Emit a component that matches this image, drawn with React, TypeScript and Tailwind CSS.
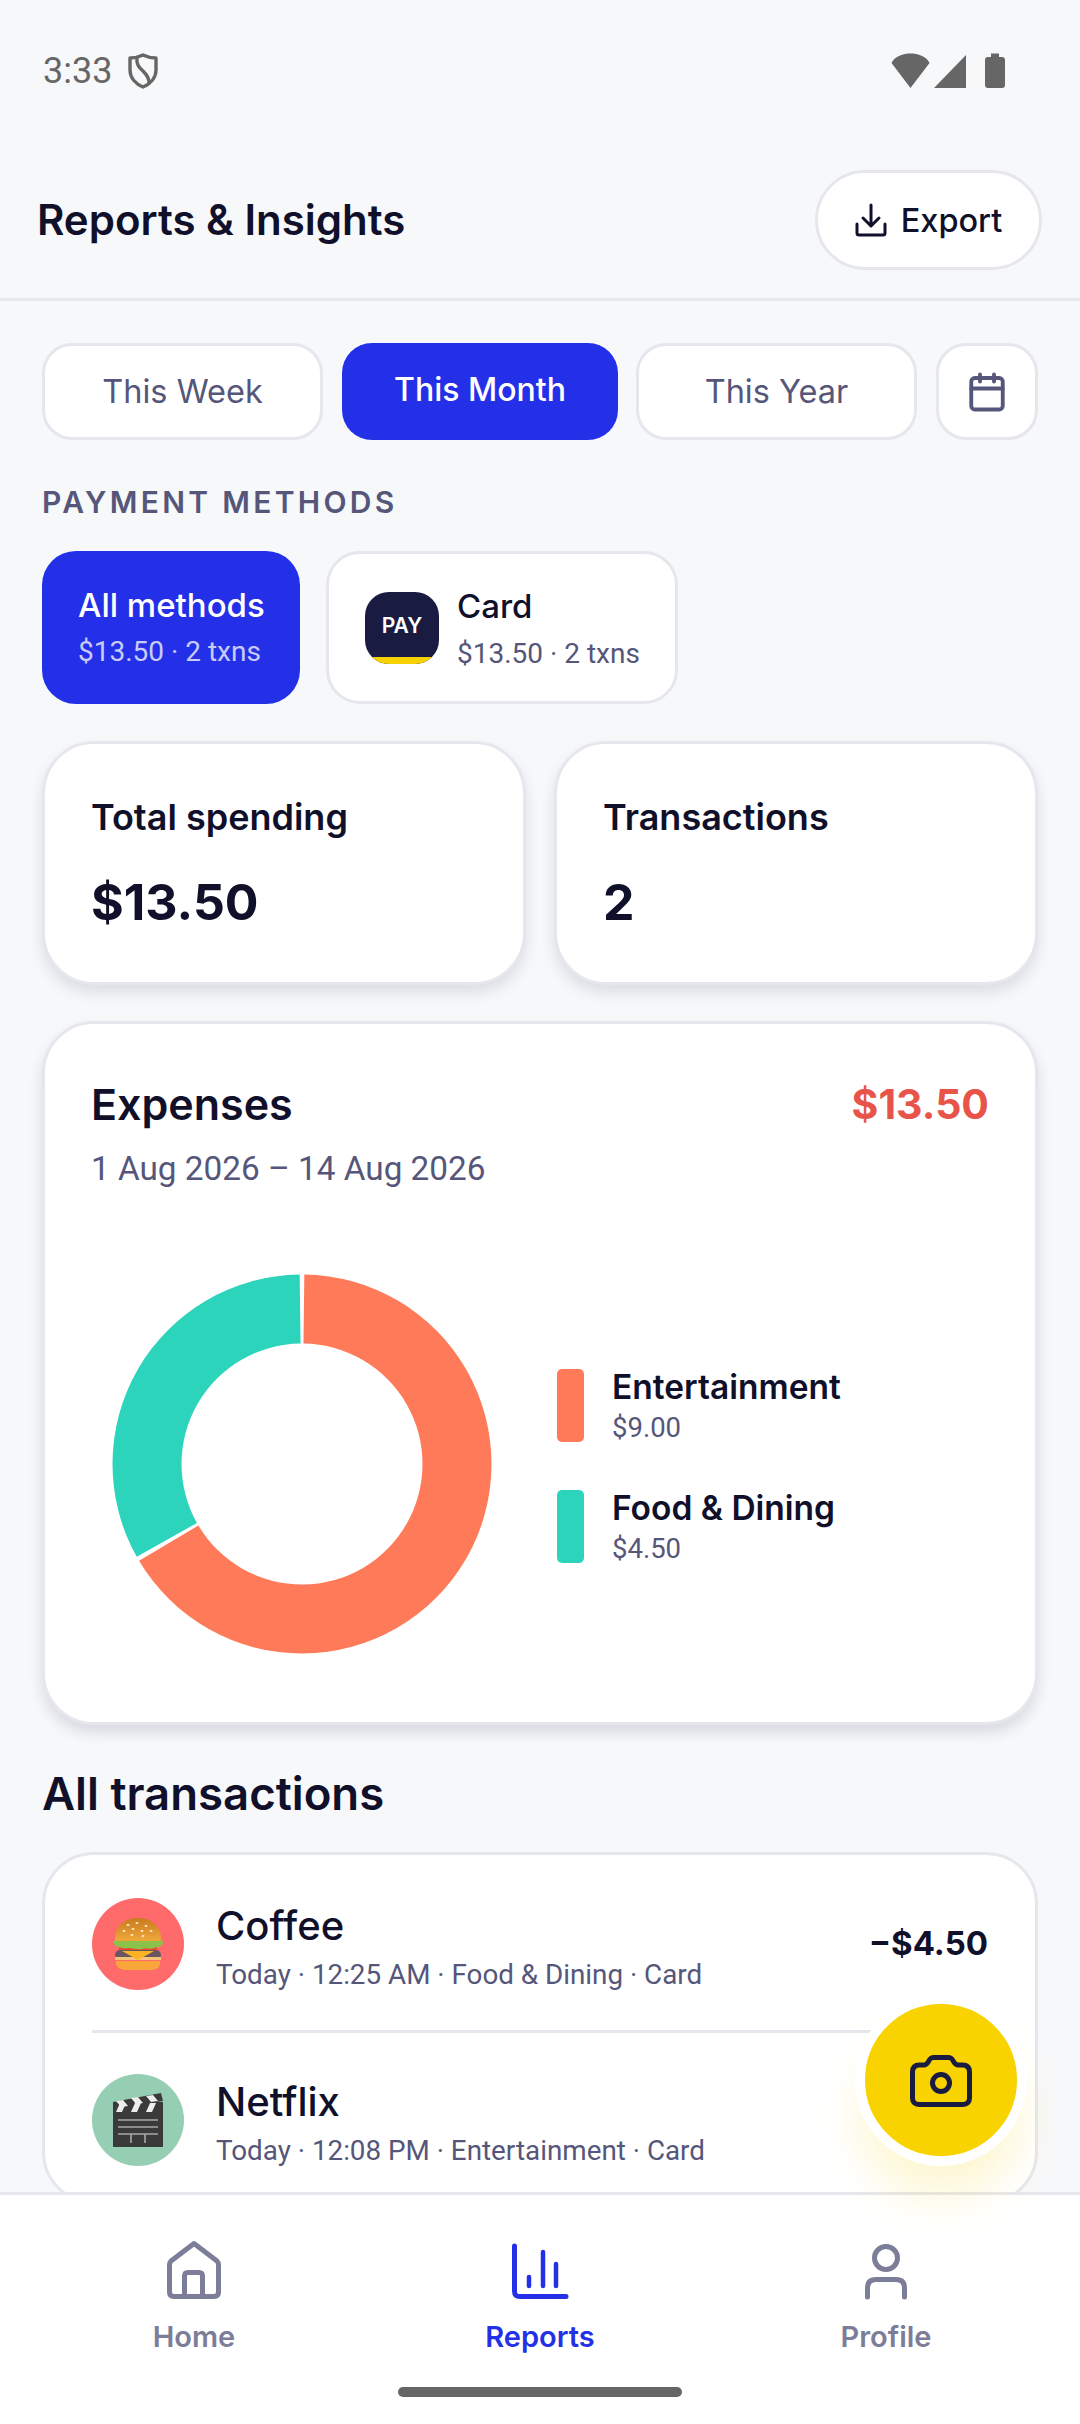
import { Calendar } from 'lucide-react';

const HEADING = "font-['Inter','Lato',sans-serif]";
const BODY = "font-['Roboto','Liberation_Sans',sans-serif]";

// annular sector, angles in degrees clockwise from 12 o'clock
function sector(cx: number, cy: number, r1: number, r2: number, a0: number, a1: number) {
  const pt = (r: number, a: number) => {
    const t = (a * Math.PI) / 180;
    return `${(cx + r * Math.sin(t)).toFixed(2)} ${(cy - r * Math.cos(t)).toFixed(2)}`;
  };
  const large = a1 - a0 > 180 ? 1 : 0;
  return `M${pt(r2, a0)} A${r2} ${r2} 0 ${large} 1 ${pt(r2, a1)} L${pt(r1, a1)} A${r1} ${r1} 0 ${large} 0 ${pt(r1, a0)} Z`;
}

function StatusBar() {
  return (
    <div className="flex h-[140px] items-start justify-between pl-[43px] pr-[74px] pt-[50px]">
      <div className="flex items-center gap-[16px]">
        <span className={`${BODY} text-[36px] leading-[42px] text-[#666666]`}>3:33</span>
        <svg width="30" height="36" viewBox="0 0 30 36" fill="none" stroke="#666666" strokeWidth="3.4" strokeLinejoin="round">
          <path d="M15 2 C19 4 23 5 28 5 V17 C28 25 22 31 15 34 C8 31 2 25 2 17 V5 C7 5 11 4 15 2 Z" />
          <path d="M9 5 C8 12 12 15 15 18 C18 21 22 25 21 31" />
        </svg>
      </div>
      <svg width="115" height="36" viewBox="0 0 115 36" fill="#666666" className="mt-[3px]">
        <path d="M19.500 35 L0.500 10 C4 3 12 0.500 19.500 0.500 C27 0.500 35 3 38.500 10 Z" />
        <path d="M43 35 L75 35 L75 2 Z" />
        <path d="M94 7 C94 5 95 4 97 4 H100 V0.500 H108 V4 H111 C113 4 114 5 114 7 V32 C114 34 113 35 111 35 H97 C95 35 94 34 94 32 Z" />
      </svg>
    </div>
  );
}

function Header() {
  return (
    <div className="flex h-[161px] items-start justify-between border-b-[3px] border-[#E6E7EC] pl-[37px] pr-[38px] pt-[30px]">
      <h1 className={`${HEADING} mt-[25px] text-[42px] leading-[50px] font-semibold text-[#10102A]`}>
        Reports &amp; Insights
      </h1>
      <div className="flex h-[100px] w-[227px] items-center justify-center gap-[14px] rounded-[50px] border-[3px] border-[#E6E7EC] bg-white">
        <svg width="32" height="34" viewBox="0 0 32 34" fill="none" stroke="#10102A" strokeWidth="3" strokeLinecap="round" strokeLinejoin="round">
          <path d="M16 2 V23 M8 15 L16 23 L24 15" />
          <path d="M2 21 V30 C2 31.500 3 32 4 32 H28 C29 32 30 31.500 30 30 V21" />
        </svg>
        <span className={`${HEADING} pt-[2px] text-[32.500px] font-medium text-[#10102A]`}>Export</span>
      </div>
    </div>
  );
}

function PeriodTabs() {
  const idle = `flex h-[97px] items-center justify-center rounded-[30px] border-[3px] border-[#E6E7EC] bg-white pt-[2px] ${HEADING} text-[32.500px] text-[#55567A]`;
  return (
    <div className="flex pl-[42px] pt-[42px]">
      <div className={`${idle} w-[281px]`}>This Week</div>
      <div className={`${HEADING} ml-[19px] flex h-[97px] w-[276px] items-center justify-center rounded-[30px] bg-[#2430E8] pb-[4px] text-[32px] font-medium text-white`}>
        This Month
      </div>
      <div className={`${idle} ml-[18px] w-[281px]`}>This Year</div>
      <div className="ml-[19px] flex h-[97px] w-[102px] items-center justify-center rounded-[30px] border-[3px] border-[#E6E7EC] bg-white">
        <Calendar size={42} strokeWidth={2.2} color="#55567A" />
      </div>
    </div>
  );
}

function PaymentMethods() {
  return (
    <div className="pl-[42px] pt-[43px]">
      <div className={`${HEADING} text-[30px] leading-[38px] font-semibold tracking-[3.300px] text-[#55567A]`}>PAYMENT METHODS</div>
      <div className="mt-[30px] flex gap-[26px]">
        <div className="flex h-[153px] w-[258px] flex-col justify-center rounded-[34px] bg-[#2430E8] pb-[3px] pl-[36px]">
          <div className={`${HEADING} text-[33px] leading-[42px] font-medium text-white`}>All methods</div>
          <div className={`${BODY} mt-[9px] text-[28px] leading-[34px] text-[#C8CBF7]`}>$13.50 · 2 txns</div>
        </div>
        <div className="flex h-[153px] w-[352px] items-center gap-[18px] rounded-[34px] border-[3px] border-[#E6E7EC] bg-white pl-[36px]">
          <div className="relative flex h-[72px] w-[74px] items-center justify-center overflow-hidden rounded-[24px] bg-[#1A1B40]">
            <span className={`${HEADING} mb-[3px] text-[21px] font-semibold text-white`}>PAY</span>
            <div className="absolute right-0 bottom-0 left-0 h-[7px] bg-[#F7D200]" />
          </div>
          <div>
            <div className={`${HEADING} text-[33px] leading-[42px] font-medium text-[#10102A]`}>Card</div>
            <div className={`${BODY} mt-[10px] text-[28px] leading-[34px] text-[#55567A]`}>$13.50 · 2 txns</div>
          </div>
        </div>
      </div>
    </div>
  );
}

function StatCard({ label, value }: { label: string; value: string }) {
  return (
    <div className="h-[244px] w-[484px] rounded-[52px] border-[3px] border-[#E6E7EC] bg-white pl-[46px] pt-[50px] shadow-[0_8px_14px_rgba(40,45,80,0.12)]">
      <div className={`${HEADING} text-[36px] leading-[46px] font-semibold text-[#10102A]`}>{label}</div>
      <div className={`${HEADING} mt-[31px] text-[50px] leading-[62px] font-bold text-[#10102A]`}>{value}</div>
    </div>
  );
}

function LegendRow({ color, name, amount }: { color: string; name: string; amount: string }) {
  return (
    <div className="flex items-center gap-[28px]">
      <div className="h-[73px] w-[27px] rounded-[5px]" style={{ backgroundColor: color }} />
      <div>
        <div className={`${HEADING} text-[33.500px] leading-[40px] font-semibold text-[#10102A]`}>{name}</div>
        <div className={`${BODY} mt-[5px] text-[27.500px] leading-[32px] text-[#55567A]`}>{amount}</div>
      </div>
    </div>
  );
}

function ExpensesCard() {
  const gap = 0.7;
  return (
    <div className="mx-[42px] mt-[36px] h-[704px] rounded-[52px] border-[3px] border-[#E6E7EC] bg-white shadow-[0_8px_14px_rgba(40,45,80,0.14)]">
      <div className="flex items-start justify-between pl-[46px] pr-[46px] pt-[53px]">
        <div>
          <div className={`${HEADING} text-[43px] leading-[54px] font-semibold text-[#10102A]`}>Expenses</div>
          <div className={`${BODY} mt-[18px] text-[33.300px] leading-[40px] text-[#55567A]`}>1 Aug 2026 – 14 Aug 2026</div>
        </div>
        <div className={`${HEADING} text-[41px] leading-[54px] font-bold text-[#E8544A]`}>$13.50</div>
      </div>
      <div className="mt-[84px] flex items-center pl-[66px]">
        <svg width="382" height="382" viewBox="0 0 382 382" className="shrink-0">
          <path d={sector(191, 191, 120.5, 189.5, gap, 240 - gap)} fill="#FF7A59" />
          <path d={sector(191, 191, 120.5, 189.5, 240 + gap, 360 - gap)} fill="#2DD4BC" />
        </svg>
        <div className="mt-[3px] ml-[64px] flex flex-col gap-[44px]">
          <LegendRow color="#FF7A59" name="Entertainment" amount="$9.00" />
          <LegendRow color="#2DD4BC" name="Food & Dining" amount="$4.50" />
        </div>
      </div>
    </div>
  );
}

function BurgerIcon() {
  return (
    <svg width="52" height="54" viewBox="0 0 52 54">
      <defs>
        <linearGradient id="bun" x1="0" y1="0" x2="0" y2="1">
          <stop offset="0" stopColor="#C97A1E" />
          <stop offset="1" stopColor="#F0A83A" />
        </linearGradient>
      </defs>
      <path d="M4 44 H48 V46 C48 51 43 53 38 53 H14 C9 53 4 51 4 46 Z" fill="#F8A63A" />
      <rect x="3" y="33" width="46" height="10" rx="5" fill="#6A5560" />
      <path d="M3 40 H49 V43 H3 Z" fill="#F5C27A" />
      <path d="M10 34 H42 L26 43 Z" fill="#FBB324" />
      <path d="M7 28 H45 V33 H7 Z" fill="#E84B2A" />
      <path d="M1 24 C4 22 48 22 51 24 C52 29 46 30 42 31 C37 33 34 30 30 32 C25 33 21 31 17 31 C11 32 1 30 1 24 Z" fill="#8BC34A" />
      <path d="M3 24 C2 8 14 1 26 1 C38 1 50 8 49 24 Z" fill="url(#bun)" />
      {[[16, 8], [25, 6], [34, 9], [12, 14], [21, 12], [30, 14], [39, 14], [20, 18], [31, 19]].map(([x, y]) => (
        <ellipse key={`${x}-${y}`} cx={x} cy={y} rx="1.5" ry="1.1" fill="#FCE8C8" />
      ))}
    </svg>
  );
}

function ClapperIcon() {
  return (
    <svg width="52" height="54" viewBox="0 0 52 54">
      <rect x="1" y="18" width="50" height="36" fill="#3A3A3A" />
      <rect x="1" y="9" width="50" height="11" fill="#3A3A3A" />
      <path d="M1 9 L49 0 L51 8 L2 16 Z" fill="#3A3A3A" />
      <g fill="#EDEDED">
        <path d="M4 8 L11 7 L16 13 L9 14 Z" />
        <path d="M19 5 L26 4 L31 10 L24 11 Z" />
        <path d="M34 3 L41 2 L46 8 L39 9 Z" />
        <path d="M8 10 H14 L10 19 H4 Z" />
        <path d="M23 10 H29 L25 19 H19 Z" />
        <path d="M38 10 H44 L40 19 H34 Z" />
      </g>
      <g stroke="#A8A8A8" strokeWidth="1.6">
        <path d="M6 27 H46 M6 34 H46 M6 41 H46 M19 41 V50 M33 41 V50" />
      </g>
    </svg>
  );
}

function TxRow({ bg, icon, title, sub, amount }: { bg: string; icon: React.ReactNode; title: string; sub: string; amount?: string }) {
  return (
    <div className="flex items-center">
      <div className="flex h-[92px] w-[92px] shrink-0 items-center justify-center rounded-full" style={{ backgroundColor: bg }}>
        {icon}
      </div>
      <div className="ml-[32px] flex-1 pt-[6px]">
        <div className={`${HEADING} text-[40px] leading-[48px] font-medium text-[#10102A]`}>{title}</div>
        <div className={`${BODY} mt-[8px] text-[27.800px] leading-[34px] text-[#55567A]`}>{sub}</div>
      </div>
      {amount && <div className={`${HEADING} text-[33px] font-bold text-[#10102A]`}>{amount}</div>}
    </div>
  );
}

function Transactions() {
  return (
    <div className="px-[42px] pt-[41px]">
      <h2 className={`${HEADING} text-[45.500px] leading-[56px] font-semibold text-[#10102A]`}>All transactions</h2>
      <div className="mt-[30px] h-[352px] rounded-[52px] border-[3px] border-[#E6E7EC] bg-white px-[47px] pt-[41px]">
        <TxRow
          bg="#FF6B6B"
          icon={<BurgerIcon />}
          title="Coffee"
          sub="Today · 12:25 AM · Food & Dining · Card"
          amount="−$4.50"
        />
        <div className="mt-[38px] mb-[39px] h-[3px] bg-[#E6E7EC]" />
        <TxRow bg="#96CEB4" icon={<ClapperIcon />} title="Netflix" sub="Today · 12:08 PM · Entertainment · Card" />
      </div>
    </div>
  );
}

function NavItem({ icon, label, active }: { icon: React.ReactNode; label: string; active?: boolean }) {
  return (
    <div className="flex w-[346px] flex-col items-center">
      <div className="flex h-[62px] items-center justify-center">{icon}</div>
      <span className={`${HEADING} mt-[18px] text-[29px] leading-[36px] font-semibold ${active ? 'text-[#2430E8]' : 'text-[#7C7D98]'}`}>{label}</span>
    </div>
  );
}

function BottomNav() {
  return (
    <div className="relative h-[232px] border-t-[3px] border-[#E6E7EC] bg-white pl-[21px] pt-[44px]">
      <div className="flex">
        <NavItem
          label="Home"
          icon={
            <svg width="58" height="60" viewBox="0 0 58 60" fill="none" stroke="#7C7D98" strokeWidth="5" strokeLinejoin="round" strokeLinecap="round">
              <path d="M4.500 25 C4.500 23 5 22 6 21 L29 3.500 L52 21 C53 22 53.500 23 53.500 25 V52 C53.500 55 52 56.500 49 56.500 H9 C6 56.500 4.500 55 4.500 52 Z" />
              <path d="M19.500 56.500 V36 C19.500 33.500 21 32.500 23 32.500 H34 C36 32.500 37.500 33.500 37.500 36 V56.500" />
            </svg>
          }
        />
        <NavItem
          active
          label="Reports"
          icon={
            <svg width="58" height="58" viewBox="0 0 58 58" fill="none" stroke="#2430E8" strokeWidth="5" strokeLinecap="round" strokeLinejoin="round">
              <path d="M3.500 5 V50 C3.500 54 5 55.500 9 55.500 H55" />
              <path strokeWidth="4.500" d="M18 36 V45 M32 11 V45 M45 23 V45" />
            </svg>
          }
        />
        <NavItem
          label="Profile"
          icon={
            <svg width="44" height="60" viewBox="0 0 44 60" fill="none" stroke="#7C7D98" strokeWidth="5" strokeLinecap="round">
              <circle cx="22" cy="18" r="11.500" />
              <path d="M3.500 57 V48 C3.500 42 7 39.500 12 39.500 H32 C37 39.500 40.500 42 40.500 48 V57" />
            </svg>
          }
        />
      </div>
      <div className="absolute bottom-[27px] left-[398px] h-[10px] w-[284px] rounded-full bg-[#666666]" />
    </div>
  );
}

export default function App() {
  return (
    <div className="relative flex h-[2424px] w-[1080px] flex-col overflow-hidden bg-[#F7F8FA]">
      <div className="h-[2192px] shrink-0 overflow-hidden">
        <StatusBar />
        <Header />
        <PeriodTabs />
        <PaymentMethods />
        <div className="mx-[42px] mt-[37px] flex justify-between">
          <StatCard label="Total spending" value="$13.50" />
          <StatCard label="Transactions" value="2" />
        </div>
        <ExpensesCard />
        <Transactions />
      </div>
      <BottomNav />
      <div className="absolute top-[1994px] left-[855px] flex h-[172px] w-[172px] items-center justify-center rounded-full border-[10px] border-white bg-[#F8D300] shadow-[0_36px_50px_-8px_rgba(247,210,0,0.2)]">
        <svg width="62" height="52" viewBox="0 0 62 52" fill="none" stroke="#1A1B40" strokeWidth="5" strokeLinejoin="round" className="mt-[2px]">
          <path d="M2.500 17 C2.500 12.500 5 10 9.500 10 H14 C16 10 17 9 18.500 6.500 C20 3.500 21 2.500 24 2.500 H38 C41 2.500 42 3.500 43.500 6.500 C45 9 46 10 48 10 H52.500 C57 10 59.500 12.500 59.500 17 V43 C59.500 47 57 49.500 53 49.500 H9 C5 49.500 2.500 47 2.500 43 Z" />
          <circle cx="31" cy="28" r="8.500" />
        </svg>
      </div>
    </div>
  );
}
